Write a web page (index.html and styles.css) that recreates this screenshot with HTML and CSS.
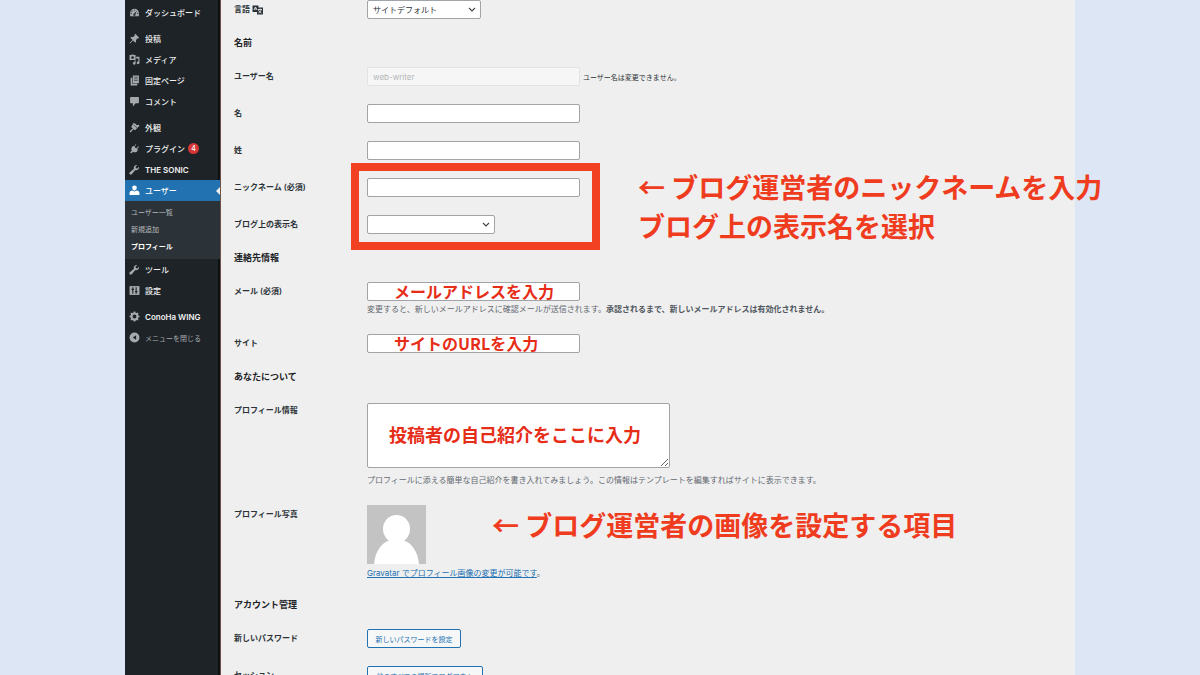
FILE: index.html
```html
<!DOCTYPE html>
<html lang="ja">
<head>
<meta charset="utf-8">
<meta name="viewport" content="width=device-width, initial-scale=1">
<title>プロフィール</title>
<link rel="stylesheet" href="styles.css">
</head>
<body>
<div class="frame">
  <nav class="sidebar" aria-label="メインメニュー">
    <ul class="menu">
      <li><a class="item" href="#"><svg class="icon" viewBox="0 0 20 20"><path d="M10 3a8 8 0 0 0-8 8v6h16v-6a8 8 0 0 0-8-8zm0 1.500a1 1 0 1 1 0 2 1 1 0 0 1 0-2zM5.500 6.500a1 1 0 1 1 0 2 1 1 0 0 1 0-2zM4 10.500a1 1 0 1 1 0 2 1 1 0 0 1 0-2zm10.500-4L11.600 13a2 2 0 1 1-2-1zm1.500 4a1 1 0 1 1 0 2 1 1 0 0 1 0-2z" fill-rule="evenodd"/></svg>ダッシュボード</a></li>
    </ul>
    <ul class="menu">
      <li><a class="item" href="#"><svg class="icon" viewBox="0 0 20 20"><path d="M11.500 1.500l7 7-1.500 1.500-1.500-.5-3 3.500.5 3-1.500 1.500-4-4L2 19l-1-1 5.500-5.500-4-4L4 7l3 .5L10.500 4.500 10 3z"/></svg>投稿</a></li>
      <li><a class="item" href="#"><svg class="icon" viewBox="0 0 20 20"><path d="M1 2h3l1-1h3l1 1h3v9H1zm5.500 2a2.500 2.500 0 1 0 0 5 2.500 2.500 0 0 0 0-5zM13 5h6v11a2.500 2.500 0 1 1-2-2.400V8h-4zM10 12h2v5a2.500 2.500 0 1 1-2-2.400z" fill-rule="evenodd"/></svg>メディア</a></li>
      <li><a class="item" href="#"><svg class="icon" viewBox="0 0 20 20"><path d="M7 1h11v14H7zM3 5h3v11h9v3H3z"/><path d="M9 4h7M9 7h7M9 10h7" stroke="#1d2327"/></svg>固定ページ</a></li>
      <li><a class="item" href="#"><svg class="icon" viewBox="0 0 20 20"><path d="M3 2h14a1 1 0 0 1 1 1v9a1 1 0 0 1-1 1h-5l-5 6v-6H3a1 1 0 0 1-1-1V3a1 1 0 0 1 1-1z"/></svg>コメント</a></li>
    </ul>
    <ul class="menu">
      <li><a class="item" href="#"><svg class="icon" viewBox="0 0 20 20"><path d="M8 2l4 1 2 3 4-1 1 2-8 8-3-2-5 6-2-2 6-5-3-3z"/><path d="M8 5l7 6" stroke="#1d2327"/></svg>外観</a></li>
      <li><a class="item" href="#"><svg class="icon" viewBox="0 0 20 20"><path d="M12 2l1 1-3 4 3 3 4-4 1 1-3 4 1 2c-2 4-6 5-9 3l-3 3-2-2 3-3c-2-4 0-7 3-9l2 1z"/></svg>プラグイン<span class="badge">4</span></a></li>
      <li><a class="item strong" href="#"><svg class="icon" viewBox="0 0 20 20"><path d="M18 5a5 5 0 0 1-6.500 6L5 18.500A2 2 0 0 1 1.500 15L9 8.500A5 5 0 0 1 15 2l-3 3 .5 2.500L15 8z"/></svg>THE SONIC</a></li>
      <li>
        <a class="item current" href="#"><svg class="icon" viewBox="0 0 20 20"><path d="M10 1a4 4 0 0 1 4 4.500C14 8 12 10 10 10S6 8 6 5.500A4 4 0 0 1 10 1zM6 10l4 2 4-2c3 0 5 2 5 5v3H1v-3c0-3 2-5 5-5z"/></svg>ユーザー</a>
        <ul class="submenu">
          <li><a href="#">ユーザー一覧</a></li>
          <li><a href="#">新規追加</a></li>
          <li><a class="active" href="#">プロフィール</a></li>
        </ul>
      </li>
      <li><a class="item" href="#"><svg class="icon" viewBox="0 0 20 20"><path d="M18 5a5 5 0 0 1-6.500 6L5 18.500A2 2 0 0 1 1.500 15L9 8.500A5 5 0 0 1 15 2l-3 3 .5 2.500L15 8z"/></svg>ツール</a></li>
      <li><a class="item" href="#"><svg class="icon" viewBox="0 0 20 20"><path d="M1 2h18v16H1z"/><path d="M7 4v12M13 4v12M4.500 8H9M11 12h4.500" stroke="#1d2327" stroke-width="2"/></svg>設定</a></li>
    </ul>
    <ul class="menu">
      <li><a class="item strong" href="#"><svg class="icon" viewBox="0 0 20 20"><circle cx="10" cy="10" r="5.500" fill="none" stroke="currentColor" stroke-width="4"/><path d="M10 1v3M10 16v3M1 10h3M16 10h3M3.600 3.600l2 2M14.400 14.400l2 2M3.600 16.400l2-2M14.400 5.600l2-2" stroke="currentColor" stroke-width="3"/></svg>ConoHa WING</a></li>
      <li><button class="item collapse" type="button"><svg class="icon" viewBox="0 0 20 20"><path d="M10 1a9 9 0 1 1 0 18 9 9 0 0 1 0-18zm2 5.500q1 0 1 1v5q0 1-1 1L7 10z" fill-rule="evenodd"/></svg>メニューを閉じる</button></li>
    </ul>
  </nav>

  <main class="content">
    <form class="profile">
      <div class="row first">
        <label class="label" for="locale">言語 <svg class="lang-icon" viewBox="0 0 24 20"><path d="M1 1h12v4h9v14H10v-5H1z" fill="#2c3338"/><path d="M4 10l3-6 3 6M5 8h4M12 9h8M16 7v2M13 16c3-1 5-4 5-7M13 10c1 3 3 5 6 6" fill="none" stroke="#fff" stroke-width="1.500"/></svg></label>
        <div class="field"><select class="control locale" id="locale"><option>サイトデフォルト</option></select></div>
      </div>

      <h2 class="heading">名前</h2>
      <div class="row">
        <label class="label" for="login">ユーザー名</label>
        <div class="field inline"><input class="control" id="login" type="text" value="web-writer" disabled><span class="hint">ユーザー名は変更できません。</span></div>
      </div>
      <div class="row">
        <label class="label" for="first">名</label>
        <div class="field"><input class="control" id="first" type="text"></div>
      </div>
      <div class="row">
        <label class="label" for="last">姓</label>
        <div class="field"><input class="control" id="last" type="text"></div>
      </div>
      <div class="marked">
        <div class="row">
          <label class="label" for="nick">ニックネーム (必須)</label>
          <div class="field"><input class="control" id="nick" type="text"></div>
        </div>
        <div class="row">
          <label class="label" for="display">ブログ上の表示名</label>
          <div class="field"><select class="control display" id="display"><option></option></select></div>
        </div>
        <div class="outline"></div>
        <p class="callout callout-name">← ブログ運営者のニックネームを入力<br>ブログ上の表示名を選択</p>
      </div>

      <h2 class="heading">連絡先情報</h2>
      <div class="row">
        <label class="label" for="email">メール (必須)</label>
        <div class="field">
          <input class="control" id="email" type="email">
          <span class="note">メールアドレスを入力</span>
          <p class="description">変更すると、新しいメールアドレスに確認メールが送信されます。<b>承認されるまで、新しいメールアドレスは有効化されません。</b></p>
        </div>
      </div>
      <div class="row">
        <label class="label" for="url">サイト</label>
        <div class="field"><input class="control" id="url" type="url"><span class="note">サイトのURLを入力</span></div>
      </div>

      <h2 class="heading">あなたについて</h2>
      <div class="row">
        <label class="label" for="bio">プロフィール情報</label>
        <div class="field bio">
          <textarea class="control" id="bio"></textarea>
          <span class="note note-bio">投稿者の自己紹介をここに入力</span>
          <p class="description">プロフィールに添える簡単な自己紹介を書き入れてみましょう。この情報はテンプレートを編集すればサイトに表示できます。</p>
        </div>
      </div>
      <div class="row">
        <span class="label">プロフィール写真</span>
        <div class="field">
          <svg class="avatar" viewBox="0 0 59 59" role="img" aria-label="プロフィール写真"><path d="M0 0h59v59H0z" fill="#c3c3c3"/><ellipse cx="29.500" cy="24" rx="13.500" ry="14" fill="#fff"/><path d="M7 59c1-12 7-21 16-24h13c9 3 15 12 16 24z" fill="#fff"/></svg>
          <p class="description"><a class="link" href="#">Gravatar でプロフィール画像の変更が可能です</a>。</p>
          <p class="callout callout-photo">← ブログ運営者の画像を設定する項目</p>
        </div>
      </div>

      <h2 class="heading">アカウント管理</h2>
      <div class="row">
        <span class="label">新しいパスワード</span>
        <div class="field"><button class="button" type="button">新しいパスワードを設定</button></div>
      </div>
      <div class="row">
        <span class="label">セッション</span>
        <div class="field"><button class="button wide" type="button">他のすべての場所でログアウト</button></div>
      </div>
    </form>
  </main>
</div>
</body>
</html>
```
FILE: styles.css
```css
* {
  box-sizing: border-box;
}

body {
  margin: 0;
  background: #dde6f5;
  color: #2c3338;
  font-family: Inter, "Noto Sans CJK JP", sans-serif;
  font-size: 8px;
}

ul,
p,
h2 {
  margin: 0;
  padding: 0;
}

ul {
  list-style: none;
}

.frame {
  display: flex;
  height: 100vh;
  margin: 0 125px;
  background: #efefef;
}

/* Sidebar */
.sidebar {
  flex: 0 0 96px;
  display: flex;
  flex-direction: column;
  gap: 5px;
  padding-top: 2px;
  border-right: 1px solid #6d5248;
  background: linear-gradient(to left, #0e1113 2px, #1d2327 2px);
}

.item {
  display: flex;
  align-items: center;
  gap: 5px;
  width: 100%;
  height: 21px;
  padding: 0 4px;
  border: 0;
  background: none;
  color: #f0f0f1;
  font: inherit;
  font-weight: 500;
  text-decoration: none;
  white-space: nowrap;
}

.strong {
  font-weight: 600;
}

.icon {
  flex: none;
  width: 11px;
  height: 11px;
  fill: currentColor;
  color: #a7aaad;
}

.badge {
  width: 11px;
  margin-left: -2px;
  border-radius: 50%;
  background: #d63638;
  color: #fff;
  font-size: 7px;
  line-height: 11px;
  text-align: center;
}

.current {
  position: relative;
  background: #2271b1;
  color: #fff;
}

.current .icon {
  color: #fff;
}

.current::after {
  content: "";
  position: absolute;
  right: 0;
  border: 4px solid transparent;
  border-right-color: #efefef;
  border-left: 0;
}

.submenu {
  padding: 3px 6px 4px;
  background: #2c3338;
  font-size: 7px;
  line-height: 17px;
}

.submenu a {
  display: block;
  color: #b4b9be;
  text-decoration: none;
}

.submenu .active {
  color: #fff;
  font-weight: 700;
}

.collapse {
  color: #a7aaad;
  font-size: 7px;
  font-weight: 400;
}

/* Form */
.content {
  flex: 1;
  min-width: 0;
  padding-left: 13px;
}

.heading {
  color: #1d2327;
  font-size: 9px;
  font-weight: 700;
  line-height: 30px;
}

.row {
  display: grid;
  grid-template-columns: 133px 1fr;
  padding: 9px 0;
}

.first {
  padding-top: 0;
}

.label {
  color: #2c3338;
  font-weight: 600;
  line-height: 19px;
}

.lang-icon {
  width: 12px;
  height: 10px;
  vertical-align: middle;
}

.field {
  position: relative;
}

.inline {
  display: flex;
  align-items: center;
  gap: 3px;
}

.hint {
  font-size: 7px;
}

.control {
  display: block;
  width: 213px;
  height: 19px;
  margin: 0;
  padding: 0 5px;
  border: 1px solid #a0a3a7;
  border-radius: 2px;
  background: #fff;
  color: #2c3338;
  font: inherit;
}

.control:disabled {
  border-color: #e3e3e4;
  background: #f6f6f6;
  color: #b4b6b8;
}

select.control {
  appearance: none;
  background: #fff url("data:image/svg+xml,%3Csvg xmlns='http://www.w3.org/2000/svg' viewBox='0 0 8 6'%3E%3Cpath d='M1 1l3 3 3-3' fill='none' stroke='%23444' stroke-width='1.100'/%3E%3C/svg%3E") no-repeat right 4px center / 8px 6px;
}

select.locale {
  width: 114px;
}

select.display {
  width: 128px;
}

textarea.control {
  width: 303px;
  height: 65px;
  resize: both;
}

.description {
  padding-top: 2px;
  color: #646970;
  line-height: 13px;
}

.description b {
  color: #50575e;
  font-weight: 600;
}

.bio {
  padding-top: 2px;
}

.bio .description {
  padding-top: 6px;
}

.avatar {
  display: block;
  width: 59px;
  height: 59px;
}

.avatar + .description {
  line-height: 15px;
}

.link {
  color: #2271b1;
}

.button {
  display: block;
  min-width: 94px;
  height: 19px;
  padding: 0 6px;
  border: 1px solid #2271b1;
  border-radius: 2px;
  background: #f6f7f7;
  color: #2271b1;
  font: inherit;
  font-size: 7px;
}

.wide {
  min-width: 116px;
}

/* Red guidance laid over the form */
.marked {
  position: relative;
}

.outline {
  position: absolute;
  top: -6px;
  left: 117px;
  width: 249px;
  height: 87px;
  border: 8px solid #f24122;
  pointer-events: none;
}

.callout {
  position: absolute;
  color: #f03c1e;
  font-family: "Noto Sans CJK JP", sans-serif;
  font-size: 27px;
  font-weight: 700;
  line-height: 39px;
  white-space: nowrap;
}

.callout-name {
  top: -2px;
  left: 404px;
}

.callout-photo {
  top: 0;
  left: 125px;
}

.note {
  position: absolute;
  top: 0;
  left: 27px;
  color: #e62d17;
  font-family: "Noto Sans CJK JP", sans-serif;
  font-size: 16px;
  font-weight: 700;
  line-height: 19px;
  pointer-events: none;
}

.note-bio {
  top: 24px;
  left: 22px;
  font-size: 18px;
}
```
